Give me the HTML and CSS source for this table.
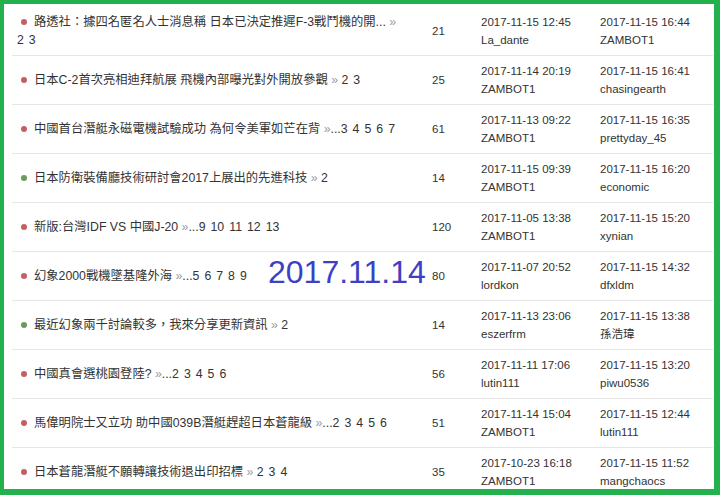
FILE: index.html
```html
<!DOCTYPE html>
<html lang="zh-Hant">
<head>
<meta charset="utf-8">
<title>討論區</title>
<link rel="stylesheet" href="styles.css">
</head>
<body>
<div class="frame">
  <div class="list">
    <div class="row">
      <div class="title"><span class="dot red"></span>路透社：據四名匿名人士消息稱 日本已決定推遲F-3戰鬥機的開... <span class="raq">»</span> <span class="pages"><a>2</a><a>3</a></span></div>
      <div class="count">21</div>
      <div class="meta"><div>2017-11-15 12:45</div><div>La_dante</div></div>
      <div class="meta"><div>2017-11-15 16:44</div><div>ZAMBOT1</div></div>
    </div>
    <div class="row">
      <div class="title"><span class="dot red"></span>日本C-2首次亮相迪拜航展 飛機內部曝光對外開放參觀 <span class="raq">»</span> <span class="pages"><a>2</a><a>3</a></span></div>
      <div class="count">25</div>
      <div class="meta"><div>2017-11-14 20:19</div><div>ZAMBOT1</div></div>
      <div class="meta"><div>2017-11-15 16:41</div><div>chasingearth</div></div>
    </div>
    <div class="row">
      <div class="title"><span class="dot red"></span>中國首台潛艇永磁電機試驗成功 為何令美軍如芒在背 <span class="raq">»</span>...<span class="pages"><a>3</a><a>4</a><a>5</a><a>6</a><a>7</a></span></div>
      <div class="count">61</div>
      <div class="meta"><div>2017-11-13 09:22</div><div>ZAMBOT1</div></div>
      <div class="meta"><div>2017-11-15 16:35</div><div>prettyday_45</div></div>
    </div>
    <div class="row">
      <div class="title"><span class="dot green"></span>日本防衛裝備廳技術研討會2017上展出的先進科技 <span class="raq">»</span> <span class="pages"><a>2</a></span></div>
      <div class="count">14</div>
      <div class="meta"><div>2017-11-15 09:39</div><div>ZAMBOT1</div></div>
      <div class="meta"><div>2017-11-15 16:20</div><div>economic</div></div>
    </div>
    <div class="row">
      <div class="title"><span class="dot red"></span>新版:台灣IDF VS 中國J-20 <span class="raq">»</span>...<span class="pages"><a>9</a><a>10</a><a>11</a><a>12</a><a>13</a></span></div>
      <div class="count">120</div>
      <div class="meta"><div>2017-11-05 13:38</div><div>ZAMBOT1</div></div>
      <div class="meta"><div>2017-11-15 15:20</div><div>xynian</div></div>
    </div>
    <div class="row">
      <div class="title"><span class="dot red"></span>幻象2000戰機墜基隆外海 <span class="raq">»</span>...<span class="pages"><a>5</a><a>6</a><a>7</a><a>8</a><a>9</a></span></div>
      <div class="count">80</div>
      <div class="meta"><div>2017-11-07 20:52</div><div>lordkon</div></div>
      <div class="meta"><div>2017-11-15 14:32</div><div>dfxldm</div></div>
    </div>
    <div class="row">
      <div class="title"><span class="dot green"></span>最近幻象兩千討論較多，我來分享更新資訊 <span class="raq">»</span> <span class="pages"><a>2</a></span></div>
      <div class="count">14</div>
      <div class="meta"><div>2017-11-13 23:06</div><div>eszerfrm</div></div>
      <div class="meta"><div>2017-11-15 13:38</div><div>孫浩瑋</div></div>
    </div>
    <div class="row">
      <div class="title"><span class="dot red"></span>中國真會選桃園登陸? <span class="raq">»</span>...<span class="pages"><a>2</a><a>3</a><a>4</a><a>5</a><a>6</a></span></div>
      <div class="count">56</div>
      <div class="meta"><div>2017-11-11 17:06</div><div>lutin111</div></div>
      <div class="meta"><div>2017-11-15 13:20</div><div>piwu0536</div></div>
    </div>
    <div class="row">
      <div class="title"><span class="dot red"></span>馬偉明院士又立功 助中國039B潛艇趕超日本蒼龍級 <span class="raq">»</span>...<span class="pages"><a>2</a><a>3</a><a>4</a><a>5</a><a>6</a></span></div>
      <div class="count">51</div>
      <div class="meta"><div>2017-11-14 15:04</div><div>ZAMBOT1</div></div>
      <div class="meta"><div>2017-11-15 12:44</div><div>lutin111</div></div>
    </div>
    <div class="row">
      <div class="title"><span class="dot red"></span>日本蒼龍潛艇不願轉讓技術退出印招標 <span class="raq">»</span> <span class="pages"><a>2</a><a>3</a><a>4</a></span></div>
      <div class="count">35</div>
      <div class="meta"><div>2017-10-23 16:18</div><div>ZAMBOT1</div></div>
      <div class="meta"><div>2017-11-15 11:52</div><div>mangchaocs</div></div>
    </div>
  </div>
  <div class="stamp">2017.11.14</div>
</div>
</body>
</html>
```

FILE: styles.css
```css
html, body {
  margin: 0;
  padding: 0;
  background: #ffffff;
}

.frame {
  position: relative;
  width: 720px;
  height: 495px;
  box-sizing: border-box;
  border-style: solid;
  border-color: #22b14c;
  border-width: 4px 6px 6px 4px;
  background: #ffffff;
  overflow: hidden;
  font-family: "Liberation Sans", "Noto Sans CJK TC", Arial, sans-serif;
  color: #333333;
}

.list {
  margin: 0 1px 0 8px;
  padding-top: 3px;
}

.row {
  display: grid;
  grid-template-columns: 420px 49px 119px 1fr;
  align-items: center;
  padding: 6px 0;
  border-bottom: 1px solid #e6e6e6;
}

.title {
  font-size: 12.3px;
  line-height: 18px;
  padding: 0 22px 0 5px;
  color: #333333;
}

.dot {
  display: inline-block;
  width: 6px;
  height: 6px;
  border-radius: 50%;
  margin: 0 7px 0 4px;
  vertical-align: middle;
  position: relative;
  top: -1px;
}

.dot.red {
  background: #c26060;
}

.dot.green {
  background: #6c9a5c;
}

.raq {
  color: #9a9a9a;
}

.pages {
  white-space: nowrap;
}

.pages a {
  color: #333333;
  text-decoration: none;
}

.pages a + a {
  margin-left: 5px;
}

.count {
  font-size: 11.5px;
  line-height: 18px;
}

.meta {
  font-size: 11.5px;
  line-height: 18px;
  white-space: nowrap;
}

.stamp {
  position: absolute;
  left: 264px;
  top: 252px;
  font-family: "Liberation Sans", Arial, sans-serif;
  font-size: 32px;
  line-height: 1;
  color: #3f3fc6;
}
```
